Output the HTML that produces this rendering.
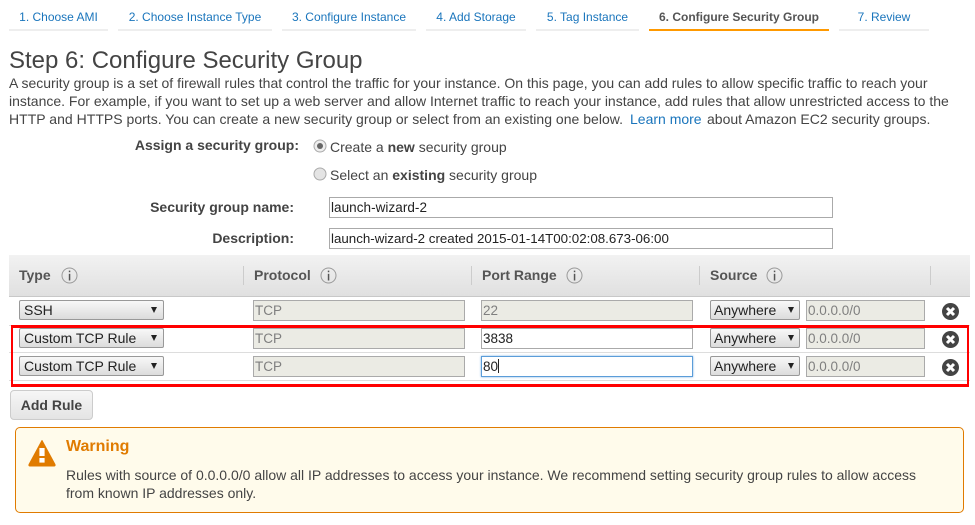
<!DOCTYPE html>
<html><head><meta charset="utf-8">
<style>
html,body{margin:0;padding:0;background:#fff}
body{width:975px;height:525px;position:relative;overflow:hidden;font-family:"Liberation Sans",sans-serif;color:#444;font-size:14px}
.a{position:absolute;white-space:nowrap}
.tab{position:absolute;top:0;height:31px;border-bottom:2px solid #eee;box-sizing:border-box;color:#1a75bc;font-size:12px;line-height:35px;text-align:center;white-space:nowrap}
.lab{position:absolute;font-weight:bold;text-align:right;white-space:nowrap;line-height:18px;color:#444}
.inp{position:absolute;box-sizing:border-box;border:1px solid #aaa;background:#fff;height:21px;font-size:13.5px;line-height:19px;padding-left:1px;color:#222;white-space:nowrap}
.dis{position:absolute;box-sizing:border-box;border:1px solid #aaa;background:#ebebe4;height:21px;font-size:13.5px;line-height:19px;padding-left:1px;color:#7f7f7f}
.sel{position:absolute;box-sizing:border-box;border:1px solid #999;border-radius:2px;background:linear-gradient(#f8f8f8,#dcdcdc);height:20px;font-size:14px;line-height:18px;padding-left:4px;color:#222;white-space:nowrap}
.sel:after{content:"";position:absolute;right:6px;top:6px;border-left:3px solid transparent;border-right:3px solid transparent;border-top:6px solid #222}
.sm{padding-left:3px}
.sm:after{right:5px}
.th{position:absolute;top:266px;font-weight:bold;line-height:18px;color:#555}
.sep{position:absolute;top:266px;width:1px;height:19px;background:#ccc}
.line{position:absolute;left:9px;width:961px;height:1px;background:#ddd}
svg{position:absolute}
</style></head><body>

<div class="tab" style="left:9px;width:99px">1. Choose AMI</div>
<div class="tab" style="left:118px;width:154px">2. Choose Instance Type</div>
<div class="tab" style="left:282px;width:134px">3. Configure Instance</div>
<div class="tab" style="left:426px;width:100px">4. Add Storage</div>
<div class="tab" style="left:536px;width:103px">5. Tag Instance</div>
<div class="tab" style="left:649px;width:180px;border-color:#f90;color:#555;font-weight:bold">6. Configure Security Group</div>
<div class="tab" style="left:839px;width:90px">7. Review</div>

<div class="a" style="left:9px;top:45px;font-size:24px;line-height:32px;color:#444">Step 6: Configure Security Group</div>
<div class="a" style="left:9px;top:74px;line-height:18px">A security group is a set of firewall rules that control the traffic for your instance. On this page, you can add rules to allow specific traffic to reach your</div>
<div class="a" style="left:9px;top:92px;line-height:18px">instance. For example, if you want to set up a web server and allow Internet traffic to reach your instance, add rules that allow unrestricted access to the</div>
<div class="a" style="left:9px;top:110px;line-height:18px;letter-spacing:.02px">HTTP and HTTPS ports. You can create a new security group or select from an existing one below.</div>
<div class="a" style="left:630px;top:110px;line-height:18px;color:#1a75bc">Learn more</div>
<div class="a" style="left:707px;top:110px;line-height:18px">about Amazon EC2 security groups.</div>

<div class="lab" style="right:676px;top:136px">Assign a security group:</div>
<svg style="left:313px;top:139px" width="14" height="14"><circle cx="7" cy="7" r="6" fill="#eee" stroke="#aaa"/><circle cx="7" cy="7" r="3" fill="#666"/></svg>
<div class="a" style="left:330px;top:138px;line-height:18px">Create a <b>new</b> security group</div>
<svg style="left:313px;top:167px" width="14" height="14"><circle cx="7" cy="7" r="6" fill="#e4e4e4" stroke="#aaa"/></svg>
<div class="a" style="left:330px;top:166px;line-height:18px">Select an <b>existing</b> security group</div>

<div class="lab" style="right:681px;top:198px">Security group name:</div>
<div class="inp" style="left:329px;top:197px;width:504px;letter-spacing:.05px">launch-wizard-2</div>
<div class="lab" style="right:681px;top:229px">Description:</div>
<div class="inp" style="left:329px;top:228px;width:504px;font-size:13.33px">launch-wizard-2 created 2015-01-14T00:02:08.673-06:00</div>

<div class="a" style="left:9px;top:255px;width:961px;height:42px;background:linear-gradient(#f2f2f2,#e0e0e0);border-bottom:1px solid #c8c8c8;box-sizing:border-box"></div>
<div class="th" style="left:19px">Type</div>
<svg style="left:61px;top:267px" width="17" height="17"><circle cx="8.5" cy="8.5" r="7.5" fill="none" stroke="#999"/><rect x="7.8" y="6.8" width="1.5" height="6.7" fill="#555"/><rect x="7.8" y="3.6" width="1.5" height="1.6" fill="#555"/></svg>
<div class="sep" style="left:243px"></div>
<div class="th" style="left:254px">Protocol</div>
<svg style="left:320px;top:267px" width="17" height="17"><circle cx="8.5" cy="8.5" r="7.5" fill="none" stroke="#999"/><rect x="7.8" y="6.8" width="1.5" height="6.7" fill="#555"/><rect x="7.8" y="3.6" width="1.5" height="1.6" fill="#555"/></svg>
<div class="sep" style="left:471px"></div>
<div class="th" style="left:482px">Port Range</div>
<svg style="left:566px;top:267px" width="17" height="17"><circle cx="8.5" cy="8.5" r="7.5" fill="none" stroke="#999"/><rect x="7.8" y="6.8" width="1.5" height="6.7" fill="#555"/><rect x="7.8" y="3.6" width="1.5" height="1.6" fill="#555"/></svg>
<div class="sep" style="left:699px"></div>
<div class="th" style="left:710px">Source</div>
<svg style="left:766px;top:267px" width="17" height="17"><circle cx="8.5" cy="8.5" r="7.5" fill="none" stroke="#999"/><rect x="7.8" y="6.8" width="1.5" height="6.7" fill="#555"/><rect x="7.8" y="3.6" width="1.5" height="1.6" fill="#555"/></svg>
<div class="sep" style="left:930px"></div>

<div class="line" style="top:325px"></div>
<div class="line" style="top:352px"></div>
<div class="line" style="top:380px"></div>

<div class="a" style="left:11px;top:325px;width:958px;height:62px;border:solid #f00;border-width:3px 2px;box-sizing:border-box"></div>

<div class="sel" style="left:19px;top:300px;width:145px">SSH</div>
<div class="dis" style="left:253px;top:300px;width:212px">TCP</div>
<div class="dis" style="left:481px;top:300px;width:212px">22</div>
<div class="sel sm" style="left:710px;top:300px;width:90px">Anywhere</div>
<div class="dis" style="left:806px;top:300px;width:119px">0.0.0.0/0</div>

<div class="sel" style="left:19px;top:328px;width:145px">Custom TCP Rule</div>
<div class="dis" style="left:253px;top:328px;width:212px">TCP</div>
<div class="inp" style="left:481px;top:328px;width:212px">3838</div>
<div class="sel sm" style="left:710px;top:328px;width:90px">Anywhere</div>
<div class="dis" style="left:806px;top:328px;width:119px">0.0.0.0/0</div>

<div class="sel" style="left:19px;top:356px;width:145px">Custom TCP Rule</div>
<div class="dis" style="left:253px;top:356px;width:212px">TCP</div>
<div class="inp" style="left:481px;top:356px;width:212px;border-color:#5b9dd9;box-shadow:0 0 2px #7aaee0">80<span style="display:inline-block;width:1px;height:14px;background:#222;vertical-align:-2px"></span></div>
<div class="sel sm" style="left:710px;top:356px;width:90px">Anywhere</div>
<div class="dis" style="left:806px;top:356px;width:119px">0.0.0.0/0</div>

<svg style="left:942px;top:303px" width="17" height="17"><circle cx="8.5" cy="8.5" r="8.5" fill="#444"/><path d="M5 5L12 12M12 5L5 12" stroke="#fff" stroke-width="3"/></svg>
<svg style="left:942px;top:331px" width="17" height="17"><circle cx="8.5" cy="8.5" r="8.5" fill="#444"/><path d="M5 5L12 12M12 5L5 12" stroke="#fff" stroke-width="3"/></svg>
<svg style="left:942px;top:359px" width="17" height="17"><circle cx="8.5" cy="8.5" r="8.5" fill="#444"/><path d="M5 5L12 12M12 5L5 12" stroke="#fff" stroke-width="3"/></svg>

<div class="a" style="left:10px;top:390px;width:83px;height:30px;box-sizing:border-box;border:1px solid #ccc;border-radius:4px;background:linear-gradient(#f6f6f6,#e4e4e4);font-weight:bold;text-align:center;line-height:28px;color:#444">Add Rule</div>

<div class="a" style="left:15px;top:427px;width:949px;height:86px;box-sizing:border-box;border:1px solid #e07b00;border-radius:5px;background:#fffbeb"></div>
<svg style="left:28px;top:439px" width="29" height="28"><path d="M14 1.5L27 25.5Q27.5 27 26 27H2Q.5 27 1 25.5Z" fill="#e07b00" stroke="#e07b00" stroke-linejoin="round"/><rect x="11.4" y="9" width="5.2" height="8" fill="#fff"/><rect x="11.4" y="19" width="5.2" height="4.6" fill="#fff"/></svg>
<div class="a" style="left:66px;top:437px;font-size:16px;font-weight:bold;line-height:20px;color:#e07b00">Warning</div>
<div class="a" style="left:66px;top:466px;line-height:18px;color:#444">Rules with source of 0.0.0.0/0 allow all IP addresses to access your instance. We recommend setting security group rules to allow access</div>
<div class="a" style="left:66px;top:484px;line-height:18px;color:#444">from known IP addresses only.</div>

</body></html>
